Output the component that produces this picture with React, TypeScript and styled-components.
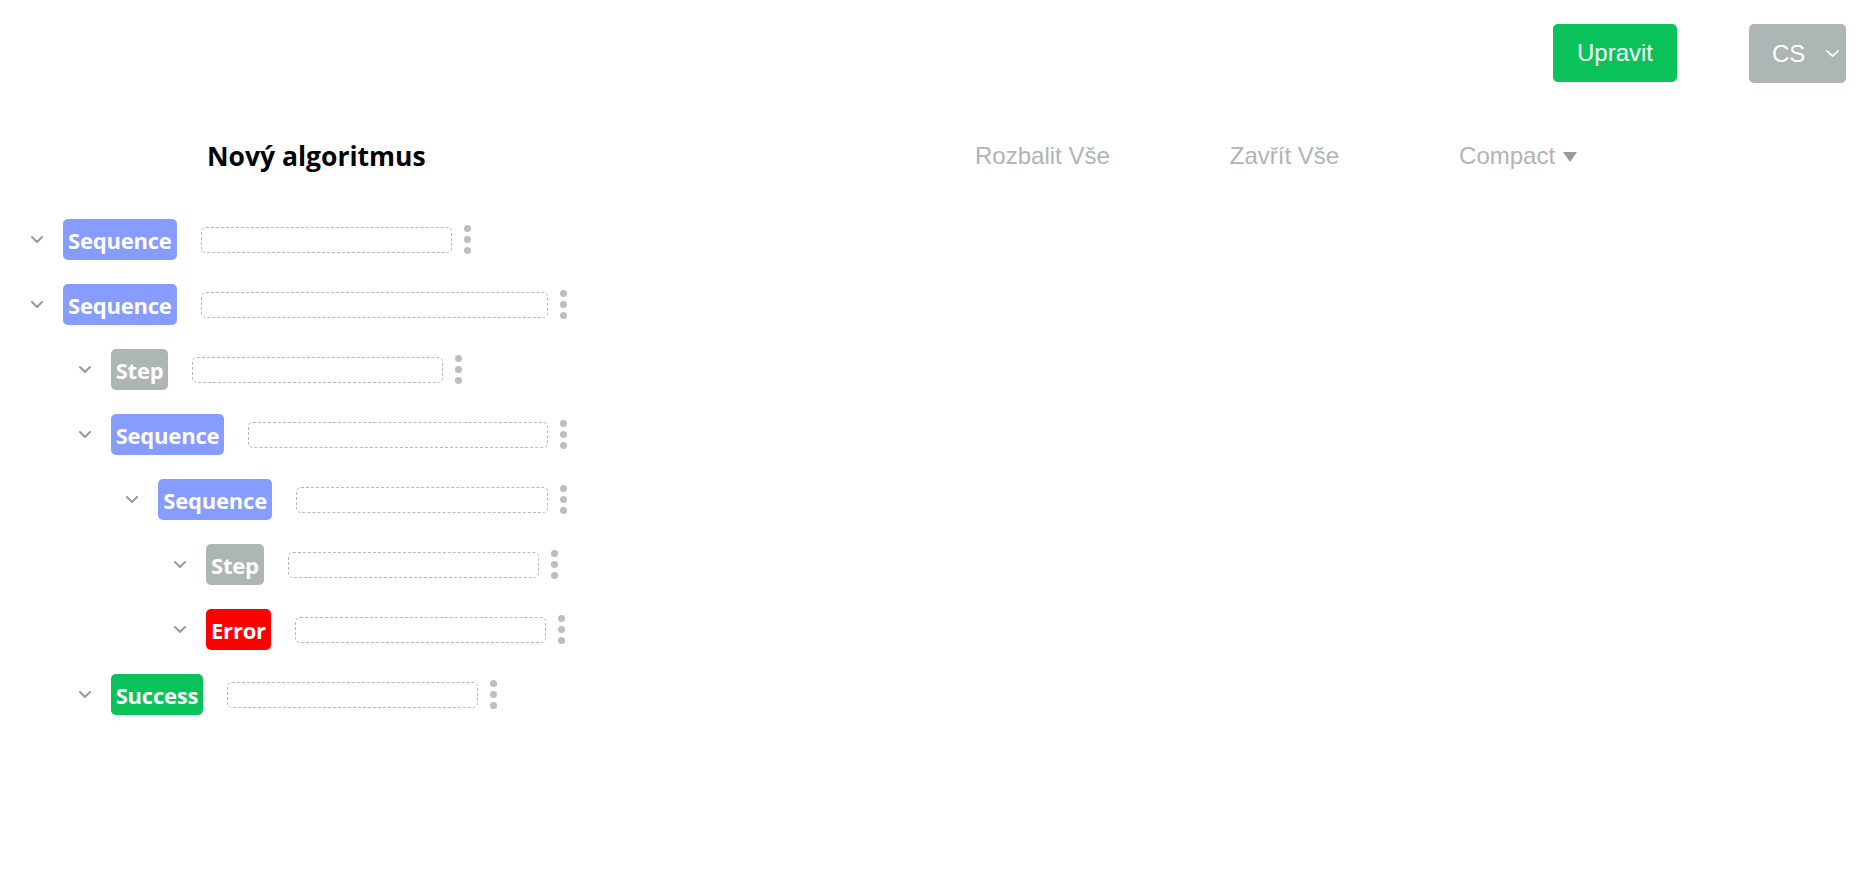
import React from "react";
import styled, { createGlobalStyle } from "styled-components";

const GlobalStyle = createGlobalStyle`
  html, body { margin: 0; padding: 0; background: #ffffff; }
  body { font-family: "Liberation Sans", Arial, sans-serif; }
  * { box-sizing: border-box; }
`;

const Page = styled.div`
  width: 1866px;
  min-height: 896px;
  display: flex;
  flex-direction: column;
`;

const TopBar = styled.div`
  display: flex;
  justify-content: flex-end;
  align-items: flex-start;
  gap: 72px;
  padding: 24px 20px 0 0;
`;

const EditButton = styled.button`
  height: 58px;
  padding: 0 24px;
  border: none;
  border-radius: 5px;
  background: #09c35a;
  color: #ffffff;
  font-family: "Liberation Sans", Arial, sans-serif;
  font-size: 24px;
  cursor: pointer;
`;

const LangSelect = styled.div`
  width: 97px;
  height: 59px;
  border-radius: 5px;
  background: #aeb5b5;
  color: #ffffff;
  display: flex;
  align-items: center;
  padding: 0 7px 0 23px;
  justify-content: space-between;
  font-size: 24px;
`;

const HeaderRow = styled.div`
  display: flex;
  align-items: center;
  height: 40px;
  margin-top: 53px;
  padding-left: 207px;
`;

const Title = styled.h1`
  margin: 0;
  width: 768px;
  font-family: "Open Sans", "Noto Sans", sans-serif;
  font-weight: 700;
  font-size: 26.5px;
  color: #000000;
`;

const Toolbar = styled.div`
  display: flex;
  align-items: center;
  gap: 120px;
`;

const ToolLink = styled.span`
  font-family: "Liberation Sans", Arial, sans-serif;
  font-size: 24px;
  color: #aeb5b5;
  display: flex;
  align-items: center;
  gap: 8px;
  cursor: pointer;
`;

const Triangle = styled.span`
  width: 0;
  height: 0;
  border-left: 7px solid transparent;
  border-right: 7px solid transparent;
  border-top: 10px solid #9a9a9a;
  margin-top: 2px;
`;

const Tree = styled.div`
  display: flex;
  flex-direction: column;
  gap: 24px;
  margin-top: 43px;
`;

const Row = styled.div<{ $level: number }>`
  display: flex;
  align-items: center;
  height: 41px;
  padding-left: ${(p) => 25 + p.$level * 47.67}px;
`;

const Toggle = styled.span`
  width: 24px;
  margin-right: 14px;
  display: flex;
  justify-content: center;
  align-items: center;
`;

const Badge = styled.span<{ $bg: string }>`
  height: 41px;
  display: flex;
  align-items: center;
  padding: 0 5px;
  border-radius: 5px;
  background: ${(p) => p.$bg};
  color: #ffffff;
  font-family: "Open Sans", "Noto Sans", sans-serif;
  font-weight: 700;
  font-size: 22px;
  letter-spacing: -0.2px;
`;

const NameInput = styled.input<{ $width: number }>`
  width: ${(p) => p.$width}px;
  height: 26px;
  margin-left: 24px;
  border: 1px dashed #b8b8b8;
  border-radius: 5px;
  background: #ffffff;
  outline: none;
`;

const Dots = styled.span`
  margin-left: 12px;
  display: flex;
  flex-direction: column;
  gap: 4px;
`;

const Dot = styled.span`
  width: 7px;
  height: 7px;
  border-radius: 50%;
  background: #bdbdbd;
`;

const Chevron = ({ color, w, h, sw }: { color: string; w: number; h: number; sw: number }) => (
  <svg width={w} height={h} viewBox={`0 0 ${w} ${h}`} fill="none">
    <polyline
      points={`${sw / 2},${sw / 2} ${w / 2},${h - sw / 2} ${w - sw / 2},${sw / 2}`}
      stroke={color}
      strokeWidth={sw}
      strokeLinecap="round"
      strokeLinejoin="round"
    />
  </svg>
);

type Node = { level: number; kind: "Sequence" | "Step" | "Error" | "Success"; width: number };

const colors: Record<Node["kind"], string> = {
  Sequence: "#879cff",
  Step: "#aeb5b5",
  Error: "#ff0000",
  Success: "#09c35a",
};

const nodes: Node[] = [
  { level: 0, kind: "Sequence", width: 251 },
  { level: 0, kind: "Sequence", width: 347 },
  { level: 1, kind: "Step", width: 251 },
  { level: 1, kind: "Sequence", width: 300 },
  { level: 2, kind: "Sequence", width: 252 },
  { level: 3, kind: "Step", width: 251 },
  { level: 3, kind: "Error", width: 251 },
  { level: 1, kind: "Success", width: 251 },
];

export default function App() {
  return (
    <Page>
      <GlobalStyle />
      <TopBar>
        <EditButton>Upravit</EditButton>
        <LangSelect>
          <span>CS</span>
          <Chevron color="#ffffff" w={13} h={7} sw={1.6} />
        </LangSelect>
      </TopBar>
      <HeaderRow>
        <Title>Nový algoritmus</Title>
        <Toolbar>
          <ToolLink>Rozbalit Vše</ToolLink>
          <ToolLink>Zavřít Vše</ToolLink>
          <ToolLink>
            Compact <Triangle />
          </ToolLink>
        </Toolbar>
      </HeaderRow>
      <Tree>
        {nodes.map((n, i) => (
          <Row key={i} $level={n.level}>
            <Toggle>
              <Chevron color="#9a9a9a" w={12} h={7} sw={2} />
            </Toggle>
            <Badge $bg={colors[n.kind]}>{n.kind}</Badge>
            <NameInput $width={n.width} />
            <Dots>
              <Dot />
              <Dot />
              <Dot />
            </Dots>
          </Row>
        ))}
      </Tree>
    </Page>
  );
}
